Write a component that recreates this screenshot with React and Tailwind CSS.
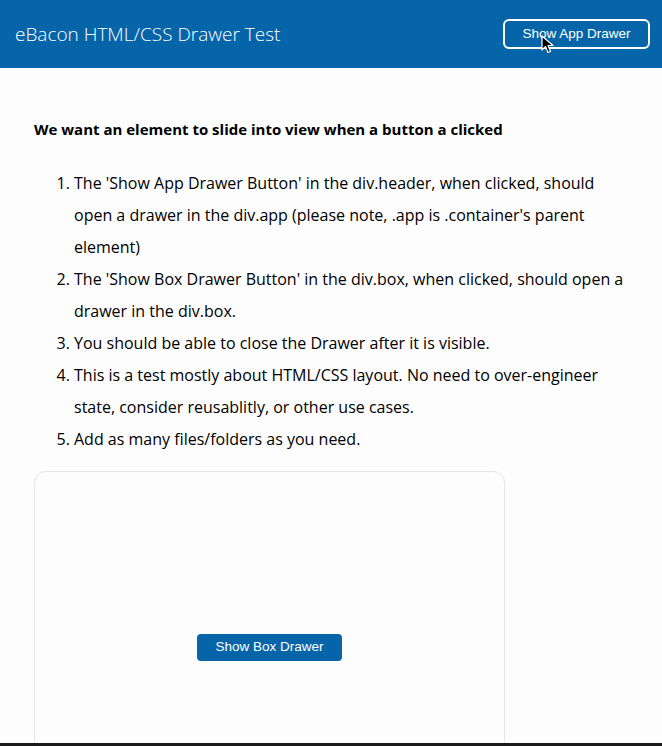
export default function App() {
  const items = [
    "The 'Show App Drawer Button' in the div.header, when clicked, should open a drawer in the div.app (please note, .app is .container's parent element)",
    "The 'Show Box Drawer Button' in the div.box, when clicked, should open a drawer in the div.box.",
    'You should be able to close the Drawer after it is visible.',
    'This is a test mostly about HTML/CSS layout. No need to over-engineer state, consider reusablitly, or other use cases.',
    'Add as many files/folders as you need.',
  ];

  return (
    <div className="relative h-[746px] overflow-hidden bg-[#fdfdfd] font-['Open_Sans',sans-serif] text-black">
      <div className="flex h-[68px] items-center justify-between bg-[#0565a8] pl-[15px] pr-[12px]">
        <h1 className="text-[19px] font-light text-white">eBacon HTML/CSS Drawer Test</h1>
        <button className="h-[30px] w-[147px] rounded-[6px] border-2 border-white font-['Liberation_Sans',sans-serif] text-[13.5px] text-white">
          Show App Drawer
        </button>
      </div>

      <div className="px-[34px] pt-[51px]">
        <p className="text-[15px] font-bold leading-[20px]">We want an element to slide into view when a button a clicked</p>
        <ol className="mt-[28px] list-decimal pl-[40px] text-[16px] leading-[32px]">
          {items.map((t) => (
            <li key={t}>{t}</li>
          ))}
        </ol>
        <div className="mt-[16px] flex h-[352px] w-[471px] items-center justify-center rounded-[12px] border border-[#e6e6e6]">
          <button className="h-[27px] w-[145px] rounded-[4px] bg-[#0565a8] font-['Liberation_Sans',sans-serif] text-[13.5px] text-white">
            Show Box Drawer
          </button>
        </div>
      </div>

      <svg className="absolute left-[541px] top-[35px]" width="14" height="20" viewBox="0 0 14 20">
        <path d="M1 1 L1 15 L4.5 11.5 L7 17.5 L9.5 16.5 L7 10.5 L12 10.5 Z" fill="black" stroke="white" strokeWidth="1.2" strokeLinejoin="round" />
      </svg>

      <div className="absolute bottom-0 left-0 h-[3px] w-full bg-[#1a1a1a]" />
    </div>
  );
}
